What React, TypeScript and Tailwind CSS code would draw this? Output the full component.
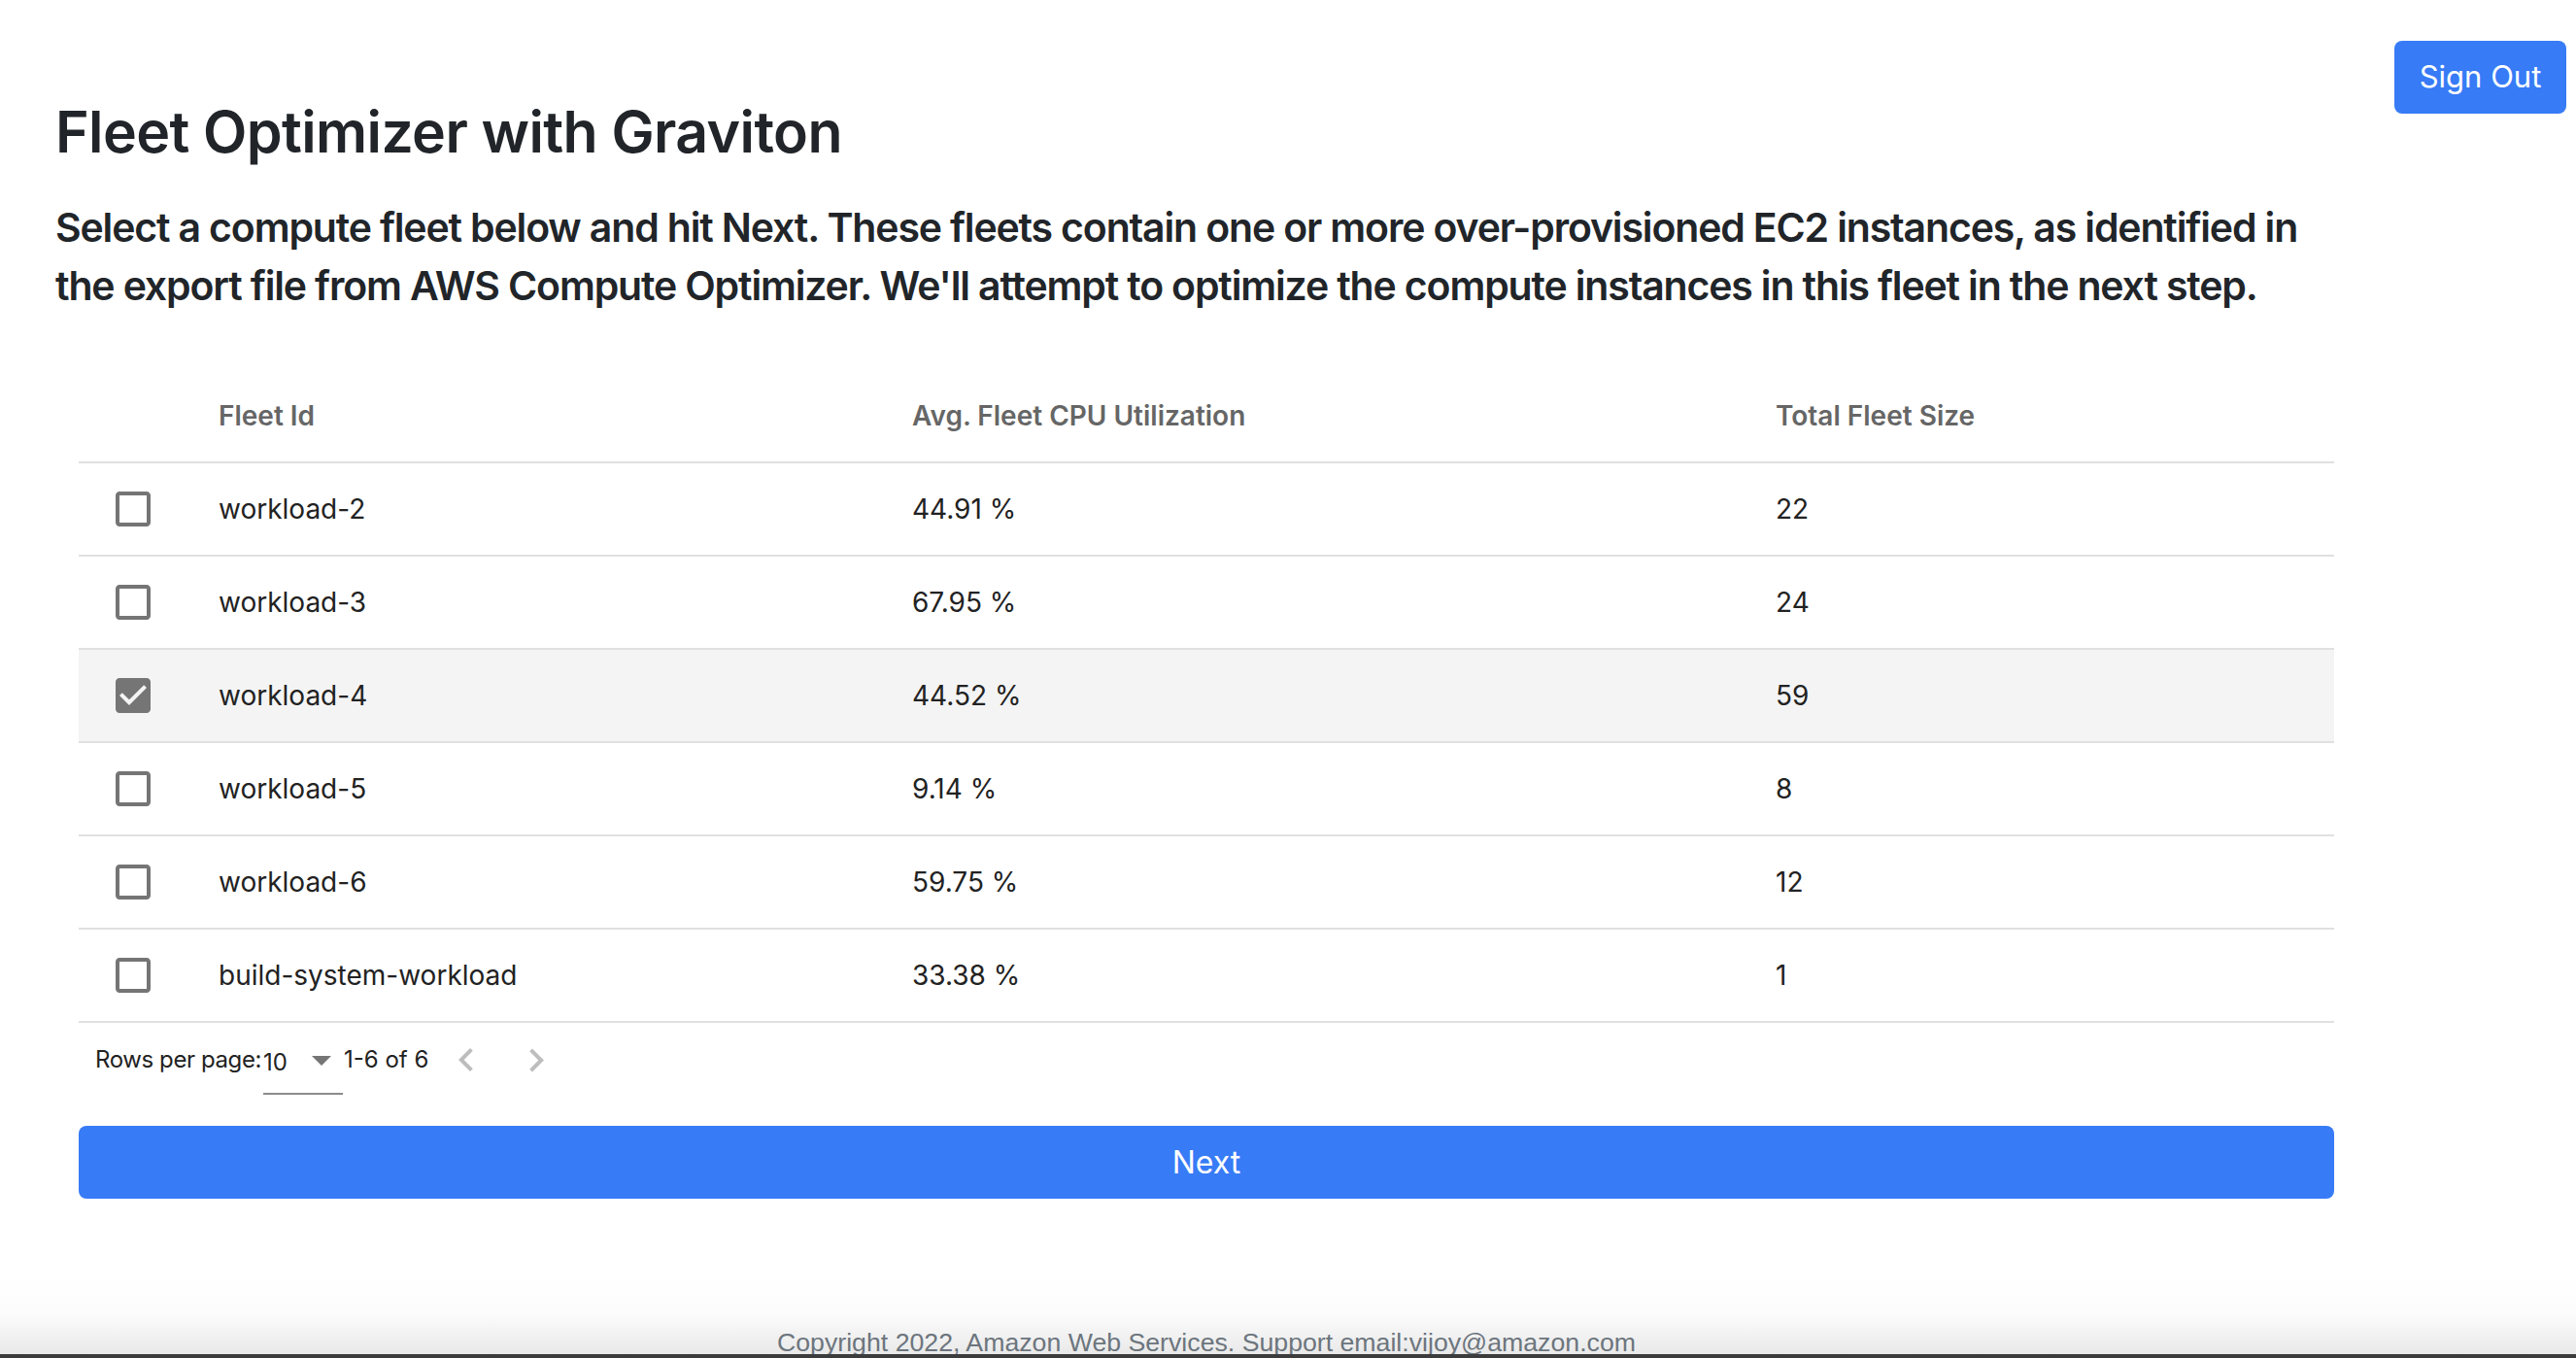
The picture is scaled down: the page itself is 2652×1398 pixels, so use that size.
import React from "react";

const rows = [
  { id: "workload-2", cpu: "44.91 %", size: "22", checked: false },
  { id: "workload-3", cpu: "67.95 %", size: "24", checked: false },
  { id: "workload-4", cpu: "44.52 %", size: "59", checked: true },
  { id: "workload-5", cpu: "9.14 %", size: "8", checked: false },
  { id: "workload-6", cpu: "59.75 %", size: "12", checked: false },
  { id: "build-system-workload", cpu: "33.38 %", size: "1", checked: false },
];

function CheckIcon({ checked }: { checked: boolean }) {
  return (
    <svg width="48" height="48" viewBox="0 0 24 24" className="block">
      {checked ? (
        <path
          fill="#757575"
          d="M19 3H5c-1.11 0-2 .9-2 2v14c0 1.1.89 2 2 2h14c1.11 0 2-.9 2-2V5c0-1.1-.89-2-2-2zm-9 14l-5-5 1.41-1.41L10 14.17l7.59-7.59L19 8l-9 9z"
        />
      ) : (
        <path
          fill="#757575"
          d="M19 5v14H5V5h14m0-2H5c-1.1 0-2 .9-2 2v14c0 1.1.9 2 2 2h14c1.1 0 2-.9 2-2V5c0-1.1-.9-2-2-2z"
        />
      )}
    </svg>
  );
}

export default function App() {
  return (
    <div
      className="flex h-[1398px] w-full flex-col overflow-hidden bg-white text-[#212529]"
      style={{ fontFamily: "Inter, 'Noto Sans', sans-serif" }}
    >
      {/* Header */}
      <div className="flex items-start justify-between pl-[57px] pr-[10px]">
        <h1 className="pt-[97px] text-[59px] font-semibold leading-[78px] tracking-[-0.6px] text-[#212529]">
          Fleet Optimizer with Graviton
        </h1>
        <button className="mt-[42px] h-[75px] w-[177px] rounded-[8px] bg-[#377bf6] text-[31px] font-normal text-white">
          Sign Out
        </button>
      </div>

      {/* Subtitle */}
      <p className="mt-[29px] pl-[57px] text-[41px] font-semibold leading-[60px] tracking-[-1.15px] text-[#212529]">
        Select a compute fleet below and hit Next. These fleets contain one or more over-provisioned EC2 instances, as identified in
        <br />
        the export file from AWS Compute Optimizer. We'll attempt to optimize the compute instances in this fleet in the next step.
      </p>

      {/* Table */}
      <div className="ml-[81px] mt-[57px] w-[2322px]">
        <div className="grid h-[96px] grid-cols-[144px_714px_889px_1fr] items-center border-b-2 border-[#e0e0e0] text-[28px] font-semibold text-[#666666]">
          <div />
          <div>Fleet Id</div>
          <div>Avg. Fleet CPU Utilization</div>
          <div>Total Fleet Size</div>
        </div>
        {rows.map((r) => (
          <div
            key={r.id}
            className={
              "grid h-[96px] grid-cols-[144px_714px_889px_1fr] items-center border-b-2 border-[#e0e0e0] text-[28px] text-[#222222] " +
              (r.checked ? "bg-[#f4f4f4]" : "bg-white")
            }
          >
            <div className="pl-[32px]">
              <CheckIcon checked={r.checked} />
            </div>
            <div>{r.id}</div>
            <div>{r.cpu}</div>
            <div>{r.size}</div>
          </div>
        ))}

        {/* Pagination */}
        <div className="flex h-[106px] items-start pl-[17px] text-[24px] text-[#222222]">
          <span className="mt-[24px] w-[173px] whitespace-nowrap leading-[28px] tracking-[-0.4px]">
            Rows per page:
          </span>
          <div className="relative h-[74px] w-[82px] border-b-2 border-[#8c8c8c]">
            <span className="block pt-[27px] leading-[28px]">10</span>
            <svg
              width="48"
              height="48"
              viewBox="0 0 24 24"
              className="absolute left-[36px] top-[14px]"
            >
              <path fill="#757575" d="M7 10l5 5 5-5z" />
            </svg>
          </div>
          <span className="ml-[1px] mt-[24px] w-[88px] whitespace-nowrap leading-[28px]">1-6 of 6</span>
          <svg width="48" height="48" viewBox="0 0 24 24" className="ml-[14px] mt-[15px]">
            <path fill="#bdbdbd" d="M15.41 16.09l-4.58-4.59 4.58-4.59L14 5.5l-6 6 6 6z" />
          </svg>
          <svg width="48" height="48" viewBox="0 0 24 24" className="ml-[24px] mt-[15px]">
            <path fill="#bdbdbd" d="M8.59 16.34l4.58-4.59-4.58-4.59L10 5.75l6 6-6 6z" />
          </svg>
        </div>

        <button className="h-[75px] w-full rounded-[8px] bg-[#377bf6] text-[32px] text-white">
          Next
        </button>
      </div>

      <div className="flex-1" />

      {/* Footer */}
      <div className="h-[84px] bg-gradient-to-b from-white via-[#fcfcfc] to-[#e9e9e9]">
        <div className="ml-[81px] flex h-full w-[2322px] items-end justify-center">
          <span
            className="text-[26.7px] leading-[24px] text-[#6c757d]"
            style={{ fontFamily: "'Liberation Sans', Arial, sans-serif" }}
          >
            Copyright 2022, Amazon Web Services. Support email:vijoy@amazon.com
          </span>
        </div>
      </div>
      <div className="h-[4px] bg-[#3c3c3c]" />
    </div>
  );
}
